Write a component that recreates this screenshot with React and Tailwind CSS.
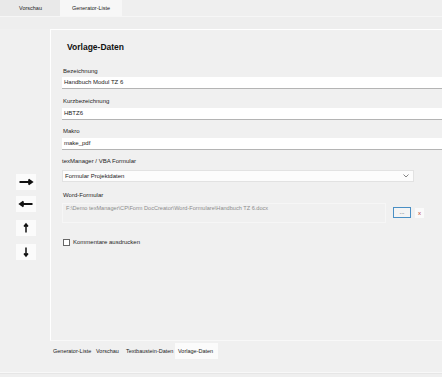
import React from 'react';

const font = { fontFamily: '"Liberation Sans", Arial, sans-serif' };

const Arrow = ({ dir }) => {
    // arrow drawn in a 20x16 box
    const paths = {
        right: 'M3.5 8 H15.5 M12.5 5.5 L16 8 L12.5 10.5',
        left: 'M16.5 8 H4.5 M7.5 5.5 L4 8 L7.5 10.5',
        up: 'M10 12.5 V4.5 M8 6.5 L10 4 L12 6.5',
        down: 'M10 3.5 V11.5 M8 9.5 L10 12 L12 9.5',
    };
    return (
        <div className="w-[20px] h-[16px] bg-[#fbfbfb] flex items-center justify-center">
            <svg width="20" height="16" viewBox="0 0 20 16">
                <path d={paths[dir]} stroke="#111" strokeWidth={dir === 'up' || dir === 'down' ? 1.5 : 1.9} fill="#111" />
            </svg>
        </div>
    );
};

const Field = ({ label, value, top, gap }) => (
    <div className={top}>
        <div className="h-[9px] leading-[9px] text-[6px] text-[#1e1e1e] ml-[12px]">{label}</div>
        <div className={`${gap} ml-[11px] h-[12px] bg-white border-b border-[#b4b4b4] text-[6px] leading-[11px] pl-[2px] text-[#1a1a1a]`}>{value}</div>
    </div>
);

const App = () => {
    return (
        <div className="w-[442px] h-[377px] bg-[#f0f0f0] overflow-hidden flex flex-col" style={font}>
            {/* top tab strip */}
            <div className="h-[16px] flex text-[5.5px] leading-[16px] text-[#222] whitespace-nowrap">
                <div className="w-[60px] bg-[#e9e9e9] text-center pl-[1px]">Vorschau</div>
                <div className="w-[62px] bg-[#f7f7f7] text-center">Generator-Liste</div>
                <div className="flex-1 bg-[#efefef]"></div>
            </div>
            <div className="h-[13px] border-t border-[#f6f6f6] bg-[#eeeeee]"></div>

            <div className="flex h-[312px]">
                {/* left button column */}
                <div className="w-[50px] flex flex-col items-start pl-[16px] pt-[145px]">
                    <Arrow dir="right" />
                    <div className="mt-[6px]"><Arrow dir="left" /></div>
                    <div className="mt-[8px]"><Arrow dir="up" /></div>
                    <div className="mt-[8px]"><Arrow dir="down" /></div>
                </div>

                {/* panel */}
                <div className="flex-1 border-t border-l border-white border-b border-b-[#f8f8f8] bg-[#f0f0f0] flex flex-col">
                    <div className="ml-[16px] mt-[12px] text-[8.5px] font-bold text-[#111] h-[10px] leading-[10px]">Vorlage-Daten</div>

                    <Field label="Bezeichnung" value="Handbuch Modul TZ 6" top="mt-[15px]" gap="mt-[1px]" />
                    <Field label="Kurzbezeichnung" value="HBTZ6" top="mt-[8px]" gap="mt-[2px]" />
                    <Field label="Makro" value="make_pdf" top="mt-[7px]" gap="mt-[2px]" />

                    <div className="mt-[7px]">
                        <div className="h-[9px] leading-[9px] text-[6px] text-[#1e1e1e] ml-[11px]">texManager / VBA Formular</div>
                        <div className="mt-[4px] ml-[11px] w-[352px] h-[12px] bg-[#fcfcfc] border border-[#e2e2e2] text-[6px] leading-[10px] pl-[2px] text-[#1a1a1a] flex items-center justify-between">
                            <span>Formular Projektdaten</span>
                            <svg width="8" height="6" viewBox="0 0 8 6" className="mr-[3px]">
                                <path d="M1.5 1.5 L4 4 L6.5 1.5" stroke="#777" strokeWidth="0.9" fill="none" />
                            </svg>
                        </div>
                    </div>

                    <div className="mt-[9px]">
                        <div className="h-[9px] leading-[9px] text-[6px] text-[#1e1e1e] ml-[12px]">Word-Formular</div>
                        <div className="flex items-start mt-[3px]">
                            <div className="ml-[11px] w-[324px] h-[20px] border border-[#f6f6f6] bg-[#f0f0f0] text-[5.6px] leading-[7px] pl-[3px] pt-[1px] text-[#8c8c8c] whitespace-nowrap overflow-hidden">
                                F:\Demo texManager\CP\Form DocCreator\Word-Formulare\Handbuch TZ 6.docx
                            </div>
                            <div className="ml-[7px] mt-[4px] w-[18px] h-[11px] border border-[#4a8fc4] bg-[#f4f4f4] text-[6px] leading-[8px] text-center text-[#333]">...</div>
                            <div className="ml-[4px] mt-[5px] w-[9px] h-[10px] bg-[#fafafa] text-[6px] leading-[10px] text-center text-[#c0392b]">x</div>
                        </div>
                    </div>

                    <div className="mt-[14px] ml-[12px] h-[10px] flex items-center">
                        <div className="w-[7px] h-[7px] border border-[#666] bg-white"></div>
                        <span className="ml-[3px] text-[6px] leading-[9px] text-[#1e1e1e]">Kommentare ausdrucken</span>
                    </div>
                </div>
            </div>

            {/* bottom tabs */}
            <div className="h-[2px]"></div>
            <div className="flex h-[16px] pl-[52px] text-[5.5px] leading-[16px] text-[#222] whitespace-nowrap">
                <div className="w-[42px] pl-[1px]">Generator-Liste</div>
                <div className="w-[30px] pl-[2px]">Vorschau</div>
                <div className="w-[51px] pl-[2px]">Textbaustein-Daten</div>
                <div className="w-[43px] pl-[3px] bg-[#fbfbfb]">Vorlage-Daten</div>
            </div>
            <div className="h-[13px]"></div>
            <div className="h-[2px] bg-[#e6e6e6] border-t border-[#f8f8f8]"></div>
            <div className="flex-1 bg-[#efefef]"></div>
        </div>
    );
};

export default App;
